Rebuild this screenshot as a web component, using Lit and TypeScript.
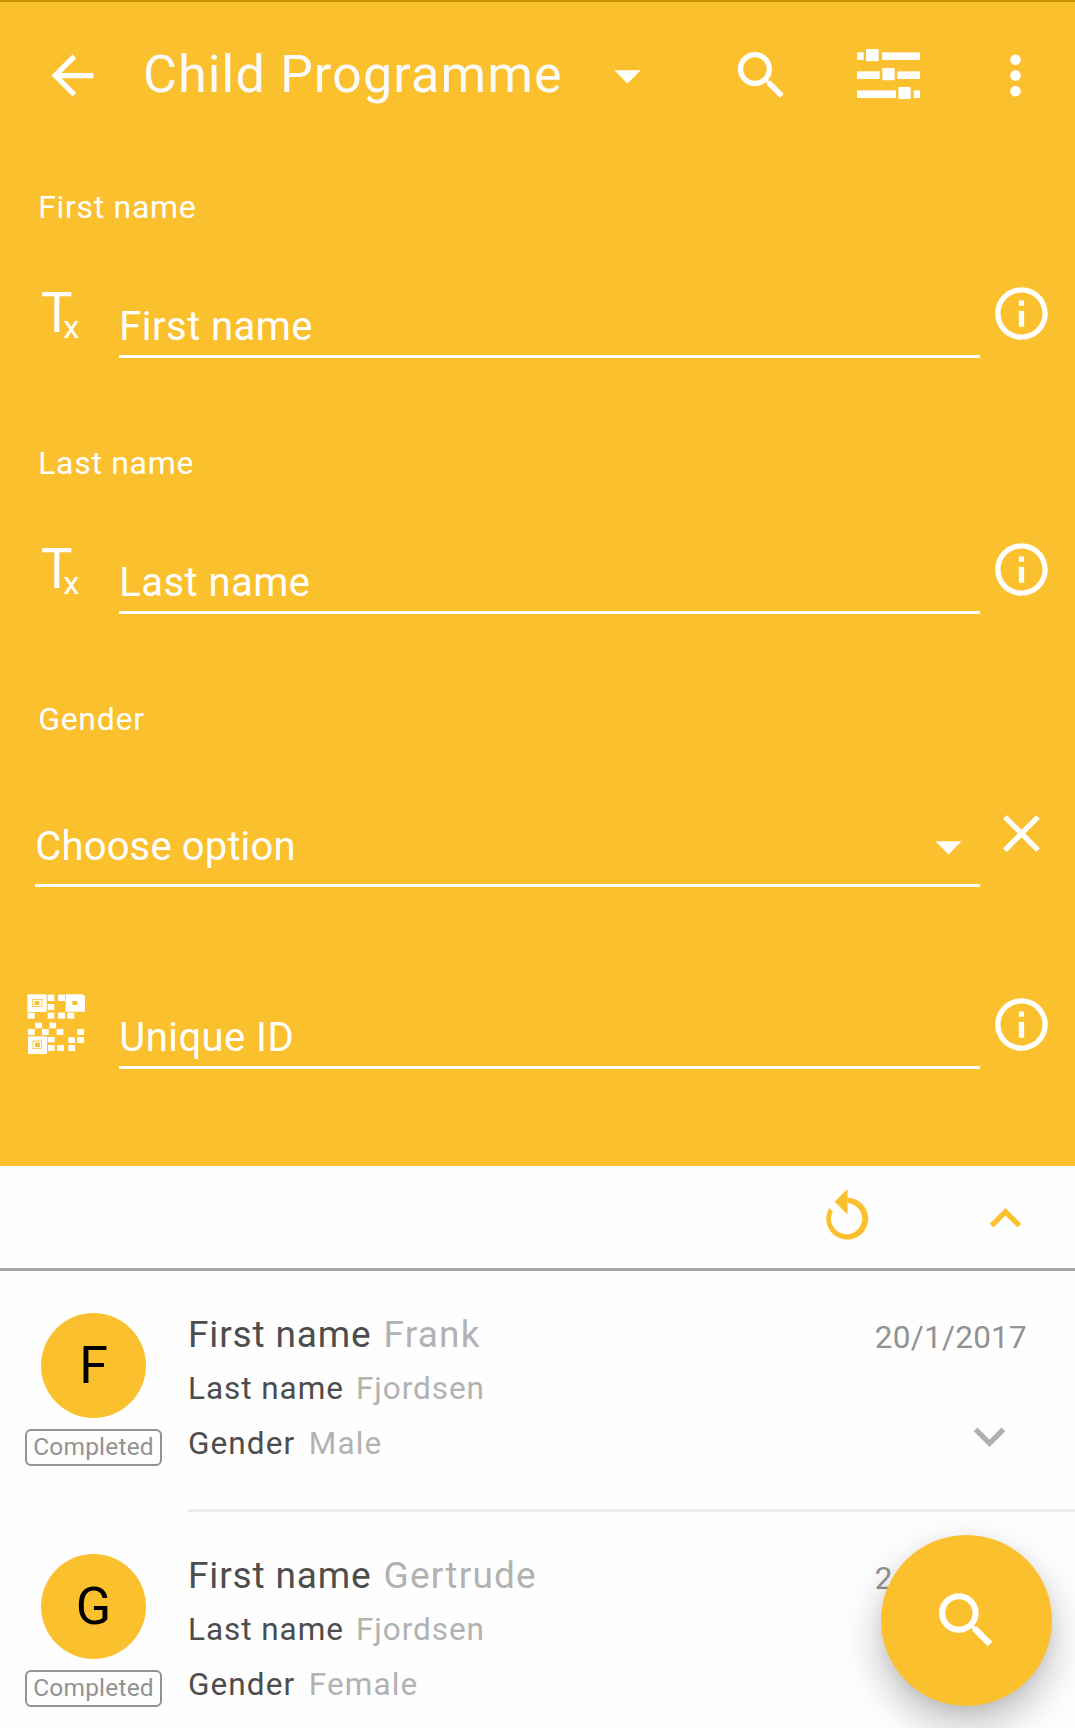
import { LitElement, html, css, svg, nothing } from "lit";
import { customElement, property } from "lit/decorators.js";

const paths: Record<string, string> = {
  back: "M20 11H7.83l5.59-5.59L12 4l-8 8 8 8 1.41-1.41L7.83 13H20v-2z",
  search:
    "M15.5 14h-.79l-.28-.27C15.41 12.59 16 11.11 16 9.5 16 5.91 13.09 3 9.5 3S3 5.91 3 9.5 5.91 16 9.5 16c1.61 0 3.09-.59 4.23-1.57l.27.28v.79l5 4.99L20.49 19l-4.99-5zm-6 0C7.01 14 5 11.99 5 9.5S7.01 5 9.5 5 14 7.01 14 9.5 11.99 14 9.5 14z",
  more: "M12 8c1.1 0 2-.9 2-2s-.9-2-2-2-2 .9-2 2 .9 2 2 2zm0 2c-1.1 0-2 .9-2 2s.9 2 2 2 2-.9 2-2-.9-2-2-2zm0 6c-1.1 0-2 .9-2 2s.9 2 2 2 2-.9 2-2-.9-2-2-2z",
  dropdown: "M7 10l5 5 5-5z",
  info: "M11 7h2v2h-2zm0 4h2v6h-2zm1-9C6.48 2 2 6.48 2 12s4.48 10 10 10 10-4.48 10-10S17.52 2 12 2zm0 18c-4.41 0-8-3.59-8-8s3.59-8 8-8 8 3.59 8 8-3.59 8-8 8z",
  close:
    "M19 6.41L17.59 5 12 10.59 6.41 5 5 6.41 10.59 12 5 17.59 6.41 19 12 13.41 17.59 19 19 17.59 13.41 12z",
  up: "M12 8l-6 6 1.41 1.41L12 10.83l4.59 4.58L18 14z",
  down: "M7.41 8.59L12 13.17l4.59-4.58L18 10l-6 6-6-6z",
};

const icon = (name: string, cls = "") =>
  html`<svg class="icon ${cls}" viewBox="0 0 24 24"><path d=${paths[name]} /></svg>`;

type Box = [number, number, number, number];

const rects = (boxes: Box[], rx = 0) =>
  boxes.map(([x, y, w, h]) => svg`<rect x=${x} y=${y} width=${w} height=${h} rx=${rx} />`);

const sliders = html`<svg class="icon sliders" viewBox="0 0 189 151">
  ${rects([
    [0, 10, 20, 23], [75, 10, 114, 23],
    [0, 67, 68, 23], [121, 67, 68, 23],
    [0, 124, 117, 23], [170, 124, 19, 23],
  ])}
  ${rects([[27, 0, 38, 37], [76, 57, 37, 37], [124, 114, 37, 37]], 4)}
</svg>`;

const qrModules: Box[] = [
  [98, 44, 20, 19], [129, 44, 21, 19], [98, 72, 20, 18],
  [38, 98, 21, 18], [98, 98, 20, 18], [129, 98, 21, 18], [157, 98, 21, 18],
  [61, 128, 20, 17], [103, 128, 20, 17],
  [39, 147, 20, 18], [81, 147, 20, 18], [125, 147, 20, 18], [187, 147, 20, 18],
  [98, 171, 21, 16], [160, 172, 20, 17], [187, 171, 20, 18],
  [99, 195, 20, 18], [127, 195, 20, 18], [160, 195, 20, 18],
];

const qr = html`<svg class="qr" viewBox="36 42 174 180">
  ${rects(qrModules)}
  ${rects([[37, 43, 58, 53], [39, 169, 57, 53]])}
  <path d="M152 43H198Q210 43 210 55V95H152Z" />
  <g class="ring">${rects([[53, 58, 28, 22], [54, 183, 26, 22]])}</g>
  <g class="hole">${rects([[59, 63, 14, 12], [60, 188, 15, 13], [172, 63, 15, 12]])}</g>
</svg>`;

const textType = html`<svg class="text-type" viewBox="0 0 45 53">
  <text class="t" x="5" y="45" textLength="31.5" lengthAdjust="spacingAndGlyphs">T</text>
  <text class="x" x="27.3" y="50.5" textLength="16.2" lengthAdjust="spacingAndGlyphs">x</text>
</svg>`;

@customElement("search-field")
export class SearchField extends LitElement {
  @property() label = "";
  @property() hint = "";
  @property() kind = "text";

  static styles = css`
    :host {
      display: block;
      color: #fff;
    }
    .label {
      padding-left: 38.2px;
      font-size: 32px;
      line-height: 40px;
      letter-spacing: 0.7px;
    }
    .row {
      display: grid;
      grid-template-columns: 119px 1fr 95px;
      height: 71px;
    }
    .label + .row {
      margin-top: 60px;
    }
    .row.select {
      grid-template-columns: 35px 1fr 95px;
      height: 80px;
    }
    .label + .row.select {
      margin-top: 68px;
    }
    .icon {
      width: 63px;
      height: 63px;
      fill: #fff;
      display: block;
    }
    .side {
      margin: -5px 0 0 10px;
    }
    .text-type {
      width: 45px;
      height: 53px;
      margin-left: 36px;
      fill: #fff;
      overflow: visible;
    }
    .t {
      font-size: 55px;
    }
    .x {
      font-size: 31px;
    }
    .qr {
      width: 58px;
      height: 60px;
      margin: -4px 0 0 27px;
      fill: #fff;
    }
    .ring {
      fill: none;
      stroke: #fbc02d;
      stroke-width: 2.5;
    }
    .hole {
      fill: #fbc02d;
    }
    .box {
      display: flex;
      justify-content: space-between;
      align-items: flex-end;
      border-bottom: 3px solid #fff;
      font-size: 40px;
      line-height: 52px;
      letter-spacing: 0.45px;
    }
    .value {
      padding: 0 0 2.4px 0.3px;
      white-space: nowrap;
    }
    .select .value {
      padding-bottom: 11.5px;
      letter-spacing: 0.15px;
    }
    .caret {
      margin-bottom: 6px;
    }
  `;

  render() {
    const select = this.kind === "select";
    return html`
      ${this.label ? html`<div class="label">${this.label}</div>` : nothing}
      <div class="row ${select ? "select" : ""}">
        <div>${this.kind === "text" ? textType : this.kind === "qr" ? qr : nothing}</div>
        <div class="box">
          <span class="value">${this.hint}</span>
          ${select ? icon("dropdown", "caret") : nothing}
        </div>
        ${icon(select ? "close" : "info", "side")}
      </div>
    `;
  }
}

interface Line {
  name: string;
  value: string;
}

@customElement("person-row")
export class PersonRow extends LitElement {
  @property() date = "";
  @property() status = "";
  @property({ attribute: false }) lines: Line[] = [];

  static styles = css`
    :host {
      display: grid;
      grid-template-columns: 188px 1fr;
      height: 241px;
    }
    .left {
      display: flex;
      flex-direction: column;
      align-items: center;
      padding: 42px 1px 0 0;
    }
    .avatar {
      width: 105px;
      height: 105px;
      border-radius: 50%;
      background: #fbc02d;
      color: #000;
      font-size: 52px;
      line-height: 105px;
      text-align: center;
    }
    .status {
      box-sizing: border-box;
      width: 137px;
      height: 37px;
      margin-top: 11px;
      border: 2px solid #929292;
      border-radius: 6px;
      color: #929292;
      font-size: 24.5px;
      line-height: 32px;
      letter-spacing: 0.2px;
      text-align: center;
    }
    .body {
      box-sizing: border-box;
      display: flex;
      justify-content: space-between;
      height: 241px;
      border-bottom: 3px solid #eee;
      padding-top: 38.5px;
    }
    .line {
      display: flex;
      gap: 12px;
      color: #4d4d4d;
      font-size: 31.5px;
      line-height: 55px;
      letter-spacing: 0.95px;
      white-space: nowrap;
    }
    .line:first-child {
      font-size: 37px;
      line-height: 50px;
      letter-spacing: 0.85px;
      margin-bottom: 1px;
    }
    .line:first-child .value {
      letter-spacing: 1.2px;
    }
    .line:last-child {
      gap: 13.5px;
      letter-spacing: 1.1px;
    }
    .value {
      color: #b2b2b2;
    }
    .right {
      display: flex;
      flex-direction: column;
      align-items: flex-end;
      padding-right: 48px;
      color: #929292;
      font-size: 31.5px;
      line-height: 56px;
      letter-spacing: 0.25px;
    }
    .icon {
      width: 63px;
      height: 63px;
      fill: #b0b0b0;
      margin: 39px 6px 0 0;
    }
  `;

  render() {
    return html`
      <div class="left">
        <div class="avatar">${this.lines[0]?.value.charAt(0)}</div>
        <div class="status">${this.status}</div>
      </div>
      <div class="body">
        <div>
          ${this.lines.map(
            (l) => html`<div class="line"><span>${l.name}</span><span class="value">${l.value}</span></div>`
          )}
        </div>
        <div class="right"><span>${this.date}</span>${icon("down")}</div>
      </div>
    `;
  }
}

@customElement("app-root")
export class AppRoot extends LitElement {
  static styles = css`
    :host {
      display: block;
      position: relative;
      width: 1075px;
      height: 1728px;
      overflow: hidden;
      background: #fefefe;
      font-family: Roboto, "Noto Sans", sans-serif;
    }
    .search {
      box-sizing: border-box;
      height: 1166px;
      background: #fbc02d;
      border-top: 2px solid #c79100;
    }
    .bar {
      display: flex;
      align-items: center;
      height: 147px;
      padding: 0 28px 0 40.5px;
    }
    .icon {
      width: 63px;
      height: 63px;
      fill: #fff;
      flex: none;
    }
    .title {
      margin: -1px 0 0 39.5px;
      width: 453px;
      color: #fafafa;
      font-size: 52px;
      line-height: 64px;
      letter-spacing: 1.15px;
      white-space: nowrap;
    }
    .actions {
      display: flex;
      align-items: center;
      gap: 64px;
      margin-left: auto;
    }
    .sliders {
      height: 50.4px;
      margin-top: -3px;
    }
    .fields {
      padding-top: 38px;
    }
    .gap {
      margin-bottom: 85px;
    }
    .gap-large {
      margin-bottom: 111px;
    }
    .tools {
      display: flex;
      justify-content: flex-end;
      align-items: center;
      height: 102px;
      border-bottom: 3px solid #a5a5a5;
      padding-right: 38px;
    }
    .tools .icon,
    .reset {
      fill: #fbc02d;
    }
    .tools .icon {
      margin: 3px 0 0 101px;
    }
    .reset {
      width: 51px;
      height: 52px;
      margin-top: -4px;
    }
    .fab {
      position: absolute;
      left: 880.5px;
      top: 1534.5px;
      width: 171.5px;
      height: 171.5px;
      border-radius: 50%;
      background: #fbc02d;
      box-shadow: 0 18px 42px rgba(0, 0, 0, 0.26), 0 4px 12px rgba(0, 0, 0, 0.05);
      display: flex;
      align-items: center;
      justify-content: center;
    }
    .fab .icon {
      width: 73px;
      height: 73px;
      margin-top: 1px;
    }
  `;

  render() {
    return html`
      <section class="search">
        <header class="bar">
          ${icon("back")}
          <span class="title">Child Programme</span>
          ${icon("dropdown")}
          <div class="actions">${icon("search")} ${sliders} ${icon("more")}</div>
        </header>
        <div class="fields">
          <search-field class="gap" label="First name" hint="First name"></search-field>
          <search-field class="gap" label="Last name" hint="Last name"></search-field>
          <search-field class="gap-large" kind="select" label="Gender" hint="Choose option"></search-field>
          <search-field kind="qr" hint="Unique ID"></search-field>
        </div>
      </section>
      <div class="tools">
        <svg class="reset" viewBox="0 0 51 52">
          <path d="M25.5 8.7A21 21 0 1 1 7.2 19L10.8 22.4A15.6 15.6 0 1 0 25.5 14.1Z" />
          <path d="M25.5 0V25.4L12.6 12.7Z" />
        </svg>
        ${icon("up")}
      </div>
      <person-row
        date="20/1/2017"
        status="Completed"
        .lines=${[
          { name: "First name", value: "Frank" },
          { name: "Last name", value: "Fjordsen" },
          { name: "Gender", value: "Male" },
        ]}
      ></person-row>
      <person-row
        date="24/1/2017"
        status="Completed"
        .lines=${[
          { name: "First name", value: "Gertrude" },
          { name: "Last name", value: "Fjordsen" },
          { name: "Gender", value: "Female" },
        ]}
      ></person-row>
      <div class="fab">${icon("search")}</div>
    `;
  }
}
